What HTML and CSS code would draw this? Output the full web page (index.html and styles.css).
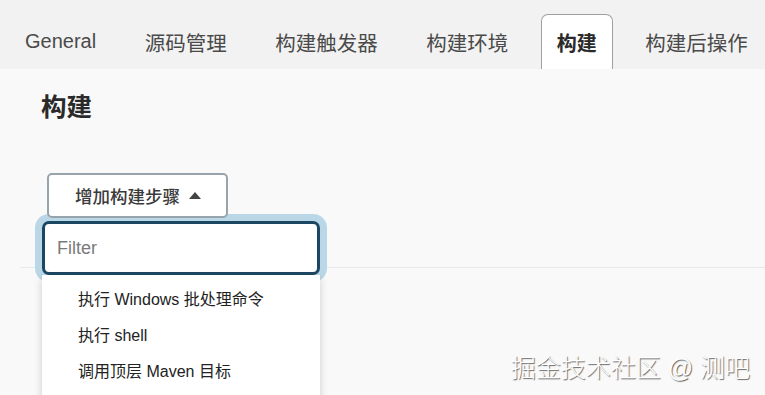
FILE: index.html
```html
<!DOCTYPE html>
<html lang="zh-CN">
  <head>
    <meta charset="UTF-8" />
    <meta name="viewport" content="width=device-width, initial-scale=1.0" />
    <title>构建</title>
    <link rel="stylesheet" href="styles.css">
  </head>

  <body>
    <div class="tabs">
      <div class="tab">General</div>
      <div class="tab">源码管理</div>
      <div class="tab">构建触发器</div>
      <div class="tab">构建环境</div>
      <div class="tab active">构建</div>
      <div class="tab">构建后操作</div>
    </div>

    <div class="content">
      <h1 class="section-title">构建</h1>

      <div class="add-step">
        <button class="add-btn">
          增加构建步骤
          <svg class="caret" width="12" height="7" viewBox="0 0 12 7">
            <path d="M0 7 L6 0 L12 7 Z" fill="#444" />
          </svg>
        </button>

        <div class="step-menu">
          <input class="filter" type="text" placeholder="Filter" />
          <ul class="step-list">
            <li>执行 Windows 批处理命令</li>
            <li>执行 shell</li>
            <li>调用顶层 Maven 目标</li>
          </ul>
        </div>
      </div>

      <div class="next-section"></div>
    </div>

    <div class="watermark">掘金技术社区 @ 测吧</div>
  </body>
</html>
```

FILE: styles.css
```css
body {
  margin: 0;
  height: 395px;
  overflow: hidden;
  background: #f9f9f9;
  font-family: "Liberation Sans", "Noto Sans CJK SC", sans-serif;
  color: #333;
}

.tabs {
  display: flex;
  align-items: flex-end;
  gap: 16.5px;
  height: 69px;
  padding-left: 9px;
  background: #f2f2f2;
}

.tab {
  display: flex;
  align-items: center;
  height: 55px;
  padding: 0 16px;
  box-sizing: border-box;
  font-size: 20.5px;
  color: #4a4a4a;
}

.tab:first-child {
  font-size: 20px;
}

.tab.active {
  padding: 0 15px;
  background: #fff;
  border: 1px solid #a0a0a0;
  border-bottom: none;
  border-radius: 7px 7px 0 0;
  font-size: 20px;
  font-weight: bold;
  color: #2a2a2a;
}

.content {
  padding: 23px 0 0 41px;
}

.section-title {
  margin: 0;
  font-size: 25.5px;
  line-height: 30px;
  font-weight: bold;
  color: #2a2a2a;
}

.add-step {
  position: relative;
  margin: 51px 0 0 6px;
  width: 181px;
}

.add-btn {
  position: relative;
  z-index: 2;
  display: flex;
  align-items: center;
  gap: 9px;
  width: 181px;
  height: 45px;
  padding: 0 0 0 26px;
  box-sizing: border-box;
  background: #fff;
  border: 2px solid #98a4ab;
  border-radius: 5px;
  font-family: inherit;
  font-size: 17.5px;
  font-weight: 500;
  color: #3a3a3a;
}

.caret {
  margin-top: -1px;
}

.step-menu {
  position: absolute;
  z-index: 1;
  top: 48px;
  left: -5px;
  width: 278px;
}

.filter {
  display: block;
  width: 278px;
  height: 54px;
  box-sizing: border-box;
  padding: 0 12px;
  border: 3px solid #1c4763;
  border-radius: 7px;
  box-shadow: 0 0 0 7px #bad7e7;
  background: #fff;
  font-family: inherit;
  font-size: 18px;
  outline: none;
}

.filter::placeholder {
  color: #7a7a7a;
}

.step-list {
  list-style: none;
  margin: 0;
  padding: 7px 0 20px 36px;
  background: #fff;
  box-shadow: 0 3px 8px rgba(0, 0, 0, 0.18);
}

.step-list li {
  height: 36px;
  line-height: 36px;
  font-size: 16px;
  color: #222;
}

.next-section {
  margin: 49px 0 0 -21px;
  height: 120px;
  border-top: 1px solid #e9e9e9;
}

.watermark {
  position: absolute;
  right: 15px;
  bottom: 12px;
  font-size: 25px;
  line-height: 30px;
  font-weight: 300;
  color: #fff;
  text-shadow: 1px 1px 1px #666;
}
```
